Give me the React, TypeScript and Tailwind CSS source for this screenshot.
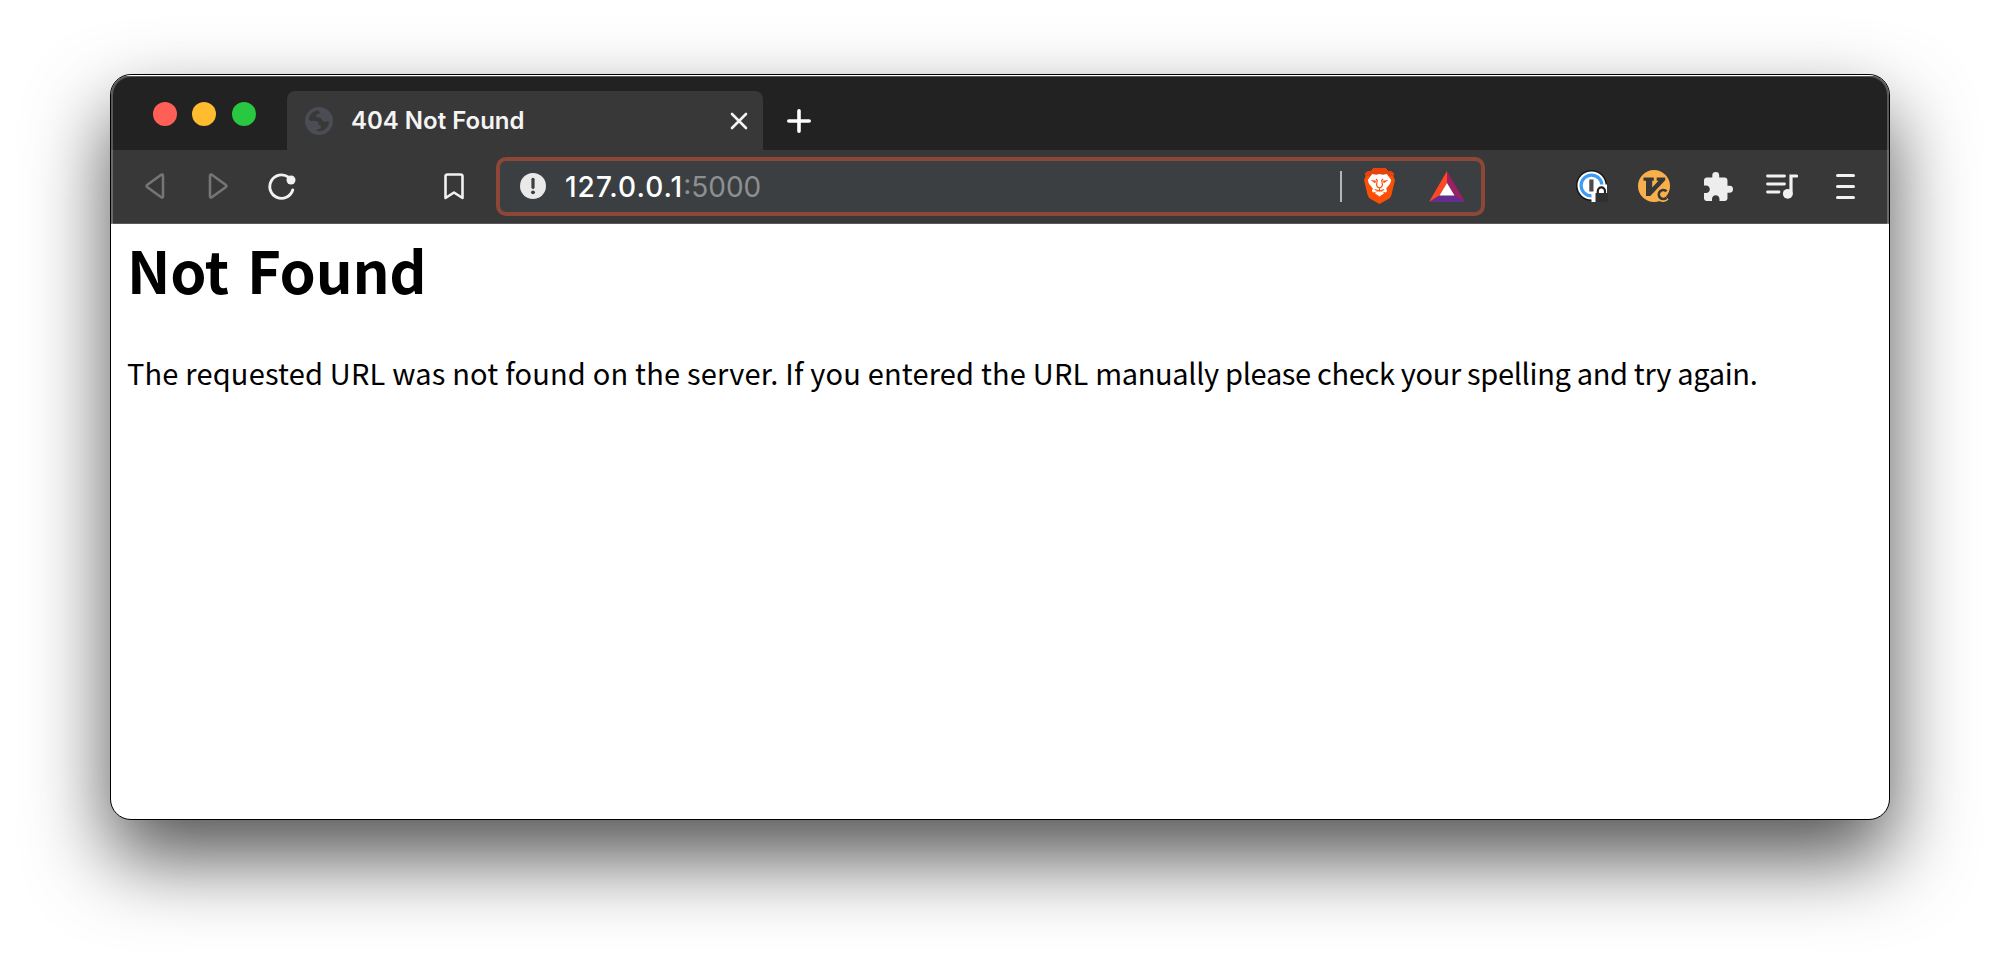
import type { ReactNode } from "react";

function IconSlot({ width, className = "", children }: { width: number; className?: string; children: ReactNode }) {
    return (
        <button className={`flex shrink-0 items-center justify-start ${className}`} style={{ width }}>
            {children}
        </button>
    );
}

function GlobeIcon() {
    return (
        <svg width="28" height="28" viewBox="0 0 28 28" className="shrink-0">
            <circle cx="14" cy="14" r="14" fill="#4b4d54" />
            <path
                d="M12.500 3.500C8 4 4.500 7.500 3.600 12.300L5.500 14h5.500c1.800 0 2.600 1 2.600 2.600v1.400l2.200.3v3.200l-3.300 1-1.500 1.300c5 1.600 11-.8 12.700-7L23.800 14l-4.800.7-3-3.800-4.600-.9-.2-2.500 3-.7 1.100-1.500z"
                fill="#383838"
            />
            <circle cx="20" cy="10.500" r="3.800" fill="#4b4d54" />
        </svg>
    );
}

function BraveIcon() {
    return (
        <svg width="31" height="36" viewBox="0 0 31 36" className="shrink-0">
            <path d="M9.500 0h12l2.800 3.200c2.300-.6 4 .2 5.700 2.600l-.8 2.400L31 12l-3.600 15c-.4 1.600-1.200 2.700-2.600 3.700l-9.300 5.300-9.300-5.300c-1.400-1-2.200-2.100-2.600-3.700L0 12l1.800-3.800L1 5.800C2.700 3.400 4.400 2.600 6.700 3.200z" fill="#fb4f08" />
            <path d="M9.500 0h12l2.800 3.200c2.300-.6 4 .2 5.700 2.600l-1 2.200H2L1 5.800C2.700 3.400 4.400 2.600 6.700 3.200z" fill="#e8430b" />
            <path d="M8.200 6l4 .7 3.300-.6 3.300.6 4-.7 4.400 6-1 3.400-4 5 .8 2.600-1 1.600-3.200-.8-3.300-1.900-3.300 1.900-3.200.8-1-1.600.8-2.600-4-5-1-3.400z" fill="#fff" />
            <path d="M15.500 22.500l4.900 2.600-4.900 3.400-4.900-3.400z" fill="#fff" />
            <path d="M6.500 12l5.700.8-1 2.400zM24.500 12l-5.700.8 1 2.400z" fill="#fb4f08" />
            <path d="M12 11l1.300 1.500-.8 4.500 1 2M19 11l-1.300 1.500.8 4.500-1 2" fill="none" stroke="#fb4f08" strokeWidth="1.200" />
            <path d="M10.800 21.500l4.700 1.500 4.700-1.500M13 18.800l2.500 1.200 2.500-1.200M15.500 20v3" fill="none" stroke="#fb4f08" strokeWidth="1.200" />
        </svg>
    );
}

function RewardsIcon() {
    return (
        <svg width="36" height="31" viewBox="0 0 36 31" className="shrink-0">
            <path d="M18 0L0 31l10.500-6.400L18 12z" fill="#ff4724" />
            <path d="M18 0l18 31-10.500-6.400L18 12z" fill="#9e1f63" />
            <path d="M0 31h36l-10.500-6.400h-15z" fill="#662d91" />
            <path d="M18 12l7.500 12.600h-15z" fill="#fff" />
        </svg>
    );
}

function OnePasswordIcon() {
    return (
        <svg width="32" height="32" viewBox="0 0 32 32" className="shrink-0">
            <circle cx="15.500" cy="15.500" r="15.500" fill="#151515" />
            <circle cx="15.500" cy="15.500" r="14" fill="#fff" />
            <circle cx="15.500" cy="15.500" r="10.400" fill="none" stroke="#3d9bf5" strokeWidth="3.200" />
            <path d="M15.500 24l5.500-9.500H31V32H15.500z" fill="#fff" />
            <path d="M13.300 9.500h4.200v12h-4.200z" fill="#4b4b4b" />
            <path d="M21.800 23v-2a3.600 3.600 0 0 1 7.200 0v2" fill="none" stroke="#222" strokeWidth="2.200" />
            <path d="M19.500 23H32v9H19.500z" fill="#303030" />
        </svg>
    );
}

function VimiumIcon() {
    return (
        <svg width="32" height="32" viewBox="0 0 32 32" className="shrink-0">
            <circle cx="16" cy="16" r="16" fill="#f8b04c" />
            <path d="M5.500 7.500h10.300v3.300h-1.600v6.700l6.300-6.700h-1.800V7.500h8.500v2.800L12.300 26H8V10.800H5.500z" fill="#383838" />
            <path d="M28.300 21.500a4.600 4.600 0 1 0 .2 6" fill="none" stroke="#f8b04c" strokeWidth="5.500" />
            <path d="M28.500 21.300a4.500 4.500 0 1 0 0 6.400" fill="none" stroke="#383838" strokeWidth="2.700" />
        </svg>
    );
}

function TabStrip() {
    return (
        <div className="flex h-[74px] items-end bg-[#222222]">
            <div className="mb-6 ml-[41.500px] flex w-[134.500px] gap-[15.600px]">
                <span className="size-6 rounded-full bg-[#ff5f57]" />
                <span className="size-6 rounded-full bg-[#febc2e]" />
                <span className="size-6 rounded-full bg-[#28c840]" />
            </div>
            <div className="flex h-[59px] w-[476px] items-center rounded-t-lg bg-[#383838] pl-[18px] pr-[15px]">
                <GlobeIcon />
                <span className="ml-[18px] flex-1 whitespace-nowrap font-[Inter,sans-serif] text-2xl font-semibold text-[#f4f4f4]">
                    404 Not Found
                </span>
                <svg width="18" height="18" viewBox="0 0 18 18">
                    <path d="M2 2l14 14M16 2L2 16" stroke="#f4f4f4" strokeWidth="2.600" strokeLinecap="round" />
                </svg>
            </div>
            <svg width="24" height="24" viewBox="0 0 24 24" className="mb-[17px] ml-6">
                <path d="M12 1.800v20.400M1.800 12h20.400" stroke="#fff" strokeWidth="3.600" strokeLinecap="round" />
            </svg>
        </div>
    );
}

function AddressBar() {
    return (
        <div className="flex h-[59px] w-[989px] shrink-0 items-center rounded-[10px] border-4 border-[#8c4736] bg-[#3b3f42] pl-5">
            <svg width="26" height="26" viewBox="0 0 26 26">
                <circle cx="13" cy="13" r="13" fill="#e9e9ea" />
                <path d="M13 6.300v8" stroke="#3b3f42" strokeWidth="3.200" strokeLinecap="round" />
                <circle cx="13" cy="19.300" r="1.900" fill="#3b3f42" />
            </svg>
            <span className="ml-[19px] flex-1 whitespace-nowrap pt-px font-[Inter,sans-serif] text-[28px] font-medium text-white">
                <span className="tracking-[1px]">127.0.0.1</span>
                <span className="font-normal text-[#8d8f91]">:5000</span>
            </span>
            <span className="h-[31px] w-0.5 bg-[#b4b6b8]" />
            <IconSlot width={65} className="ml-[22px]">
                <BraveIcon />
            </IconSlot>
            <IconSlot width={52}>
                <RewardsIcon />
            </IconSlot>
        </div>
    );
}

function Toolbar() {
    return (
        <div className="flex h-[74px] items-center border-b border-[#5a5a5a] bg-[#383838] pb-px pl-[34px]">
            <IconSlot width={63}>
                <svg width="20" height="26" viewBox="0 0 20 26" fill="none" stroke="#757575" strokeWidth="2.600" strokeLinejoin="round">
                    <path d="M16.200 1.800Q18 1 18 3v20q0 2-1.800 1.200L2.400 14.300Q.8 13 2.400 11.700z" />
                </svg>
            </IconSlot>
            <IconSlot width={60}>
                <svg width="20" height="26" viewBox="0 0 20 26" fill="none" stroke="#757575" strokeWidth="2.600" strokeLinejoin="round">
                    <path d="M3.800 1.800Q2 1 2 3v20q0 2 1.800 1.200l13.800-9.900q1.600-1.300 0-2.600z" />
                </svg>
            </IconSlot>
            <IconSlot width={176}>
                <svg width="28" height="27" viewBox="0 0 28 27">
                    <path d="M20.500 4.200A11.700 11.700 0 1 0 24.700 17" fill="none" stroke="#f1f1f1" strokeWidth="2.900" strokeLinecap="round" />
                    <circle cx="23" cy="7" r="4.500" fill="#f1f1f1" />
                </svg>
            </IconSlot>
            <IconSlot width={52}>
                <svg width="20" height="27" viewBox="0 0 20 27" fill="none" stroke="#f1f1f1" strokeWidth="2.600" strokeLinejoin="round">
                    <path d="M1.500 25V3.500q0-2 2-2h13q2 0 2 2V25L10 19.500z" />
                </svg>
            </IconSlot>
            <AddressBar />
            <IconSlot width={62} className="ml-[91px]">
                <OnePasswordIcon />
            </IconSlot>
            <IconSlot width={66}>
                <VimiumIcon />
            </IconSlot>
            <IconSlot width={62}>
                <svg width="29" height="29" viewBox="2 1 21 21" fill="#ededed">
                    <path d="M20.500 11H19V7c0-1.100-.9-2-2-2h-4V3.500a2.500 2.500 0 0 0-5 0V5H4c-1.100 0-1.990.9-1.990 2v3.800H3.500c1.490 0 2.700 1.210 2.700 2.700s-1.210 2.700-2.700 2.700H2V20c0 1.100.9 2 2 2h3.800v-1.500c0-1.490 1.210-2.700 2.700-2.700 1.490 0 2.700 1.210 2.700 2.700V22H17c1.100 0 2-.9 2-2v-4h1.500a2.500 2.500 0 0 0 0-5z" />
                </svg>
            </IconSlot>
            <IconSlot width={70}>
                <svg width="32" height="27" viewBox="0 0 32 27" fill="none" stroke="#f1f1f1" strokeWidth="2.800" strokeLinecap="round">
                    <path d="M1.500 3h17M1.500 11h17M1.500 19H13" />
                    <path d="M25 21V3h5.500" strokeWidth="3.200" />
                    <circle cx="21.800" cy="20.800" r="4.900" fill="#f1f1f1" stroke="none" />
                </svg>
            </IconSlot>
            <IconSlot width={20}>
                <svg width="19" height="27" viewBox="0 0 19 27" stroke="#f1f1f1" strokeWidth="3" strokeLinecap="round">
                    <path d="M1.500 2.500h16M1.500 13.500h16M1.500 24.500h16" />
                </svg>
            </IconSlot>
        </div>
    );
}

export default function App() {
    return (
        <div className="h-[965px] w-[2000px] overflow-hidden bg-white px-[110px] pt-[74px]">
            <div className="relative h-[746px] w-[1780px] overflow-hidden rounded-[21px] border border-black bg-white pt-px shadow-[0_38px_80px_rgba(0,0,0,0.68)]">
                <TabStrip />
                <Toolbar />
                <main className="px-4 font-['Noto_Sans_CJK_KR',sans-serif] text-black">
                    <h1 className="h-[93px] whitespace-nowrap text-[58px] font-bold leading-[90px] tracking-[-0.2px] [word-spacing:5px]">Not Found</h1>
                    <p className="mt-[33px] whitespace-nowrap text-[29px] leading-[44px] tracking-[0.19px]">
                        The requested URL was not found on the server. If you entered the URL{" "}
                        <span className="tracking-[-0.33px]">manually please check your spelling and try again.</span>
                    </p>
                </main>
                {/* highlight along the top edge of the frame */}
                <div className="pointer-events-none absolute inset-x-0 top-0 h-[149px] rounded-t-[20px] border-x-2 border-t-2 border-white/25" />
            </div>
        </div>
    );
}
